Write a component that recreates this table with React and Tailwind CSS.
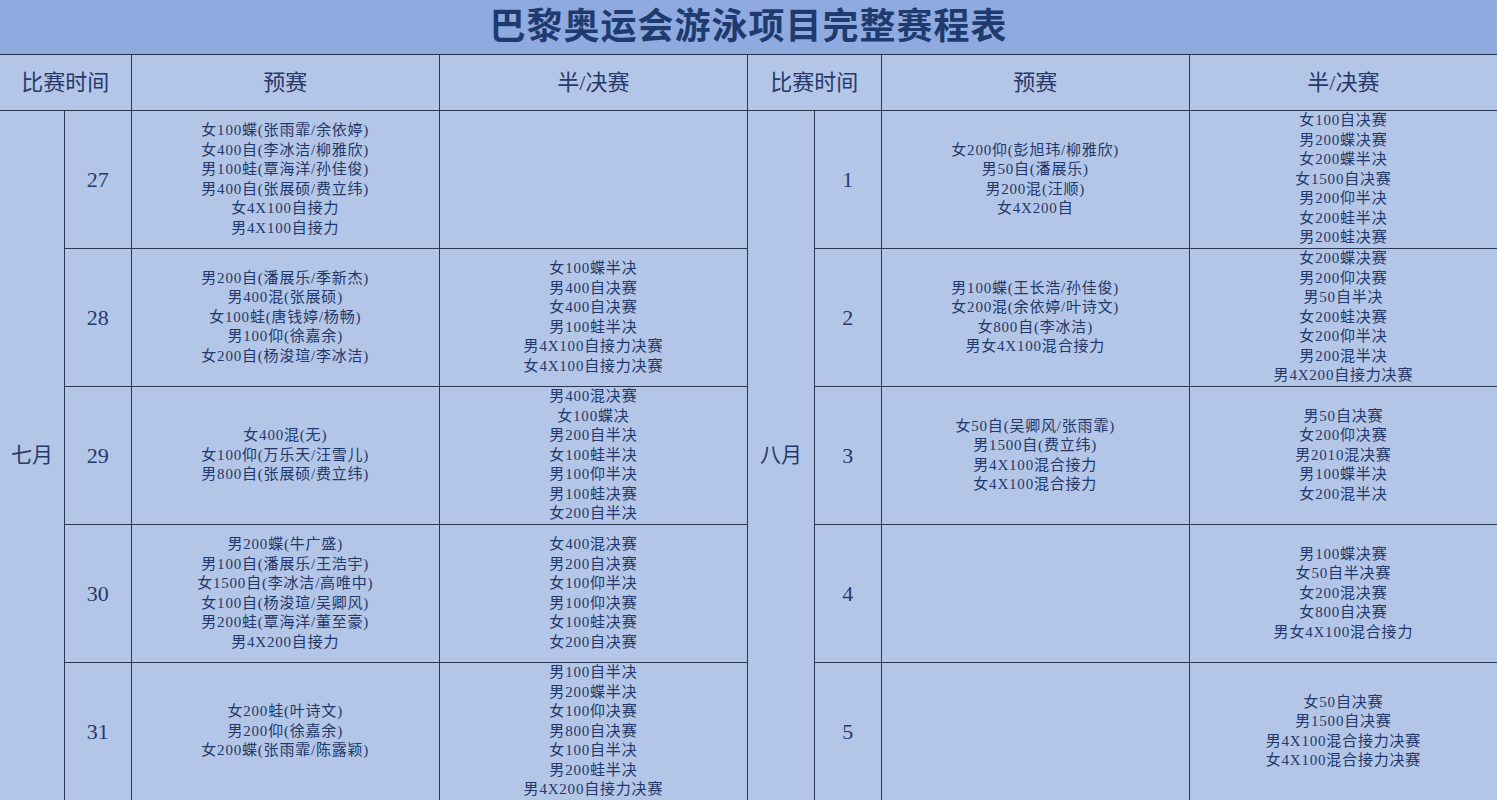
import React from "react";

const FONT = { fontFamily: '"Liberation Serif", "Noto Sans CJK SC", serif' };

const july = [
  {
    day: "27",
    heats: [
      "女100蝶(张雨霏/余依婷)",
      "女400自(李冰洁/柳雅欣)",
      "男100蛙(覃海洋/孙佳俊)",
      "男400自(张展硕/费立纬)",
      "女4X100自接力",
      "男4X100自接力",
    ],
    finals: [],
  },
  {
    day: "28",
    heats: [
      "男200自(潘展乐/季新杰)",
      "男400混(张展硕)",
      "女100蛙(唐钱婷/杨畅)",
      "男100仰(徐嘉余)",
      "女200自(杨浚瑄/李冰洁)",
    ],
    finals: [
      "女100蝶半决",
      "男400自决赛",
      "女400自决赛",
      "男100蛙半决",
      "男4X100自接力决赛",
      "女4X100自接力决赛",
    ],
  },
  {
    day: "29",
    heats: ["女400混(无)", "女100仰(万乐天/汪雪儿)", "男800自(张展硕/费立纬)"],
    finals: [
      "男400混决赛",
      "女100蝶决",
      "男200自半决",
      "女100蛙半决",
      "男100仰半决",
      "男100蛙决赛",
      "女200自半决",
    ],
  },
  {
    day: "30",
    heats: [
      "男200蝶(牛广盛)",
      "男100自(潘展乐/王浩宇)",
      "女1500自(李冰洁/高唯中)",
      "女100自(杨浚瑄/吴卿风)",
      "男200蛙(覃海洋/董至豪)",
      "男4X200自接力",
    ],
    finals: [
      "女400混决赛",
      "男200自决赛",
      "女100仰半决",
      "男100仰决赛",
      "女100蛙决赛",
      "女200自决赛",
    ],
  },
  {
    day: "31",
    heats: ["女200蛙(叶诗文)", "男200仰(徐嘉余)", "女200蝶(张雨霏/陈露颖)"],
    finals: [
      "男100自半决",
      "男200蝶半决",
      "女100仰决赛",
      "男800自决赛",
      "女100自半决",
      "男200蛙半决",
      "男4X200自接力决赛",
    ],
  },
];

const august = [
  {
    day: "1",
    heats: ["女200仰(彭旭玮/柳雅欣)", "男50自(潘展乐)", "男200混(汪顺)", "女4X200自"],
    finals: [
      "女100自决赛",
      "男200蝶决赛",
      "女200蝶半决",
      "女1500自决赛",
      "男200仰半决",
      "女200蛙半决",
      "男200蛙决赛",
    ],
  },
  {
    day: "2",
    heats: [
      "男100蝶(王长浩/孙佳俊)",
      "女200混(余依婷/叶诗文)",
      "女800自(李冰洁)",
      "男女4X100混合接力",
    ],
    finals: [
      "女200蝶决赛",
      "男200仰决赛",
      "男50自半决",
      "女200蛙决赛",
      "女200仰半决",
      "男200混半决",
      "男4X200自接力决赛",
    ],
  },
  {
    day: "3",
    heats: ["女50自(吴卿风/张雨霏)", "男1500自(费立纬)", "男4X100混合接力", "女4X100混合接力"],
    finals: ["男50自决赛", "女200仰决赛", "男2010混决赛", "男100蝶半决", "女200混半决"],
  },
  {
    day: "4",
    heats: [],
    finals: ["男100蝶决赛", "女50自半决赛", "女200混决赛", "女800自决赛", "男女4X100混合接力"],
  },
  {
    day: "5",
    heats: [],
    finals: ["女50自决赛", "男1500自决赛", "男4X100混合接力决赛", "女4X100混合接力决赛"],
  },
];

const cell = "bg-[#b4c6e7] flex items-center justify-center text-center overflow-hidden";
const head = "text-[22px] text-[#26396a]";

const Lines = ({ items }) => (
  <div className="text-[15px] leading-[19.5px] tracking-[0.8px] text-[#22386a]">
    {items.map((t, i) => (
      <div key={i} className="whitespace-nowrap">
        {t}
      </div>
    ))}
  </div>
);

export default function App() {
  return (
    <div
      className="w-[1497px] h-[800px] bg-[#2b3650] grid gap-px grid-cols-[64fr_66fr_308fr_308fr_66fr_66fr_308fr_308fr] grid-rows-[54px_55px_137px_137px_137px_137px_137px]"
      style={FONT}
    >
      {/* Title */}
      <div className="col-span-8 bg-[#8eaadf] flex items-center justify-center">
        <h1 className="text-[36px] font-bold tracking-[1px] text-[#1f3a6e]">巴黎奥运会游泳项目完整赛程表</h1>
      </div>

      {/* Header row */}
      <div className={`${cell} ${head} col-start-1 col-span-2`}>比赛时间</div>
      <div className={`${cell} ${head}`}>预赛</div>
      <div className={`${cell} ${head}`}>半/决赛</div>
      <div className={`${cell} ${head} col-span-2`}>比赛时间</div>
      <div className={`${cell} ${head}`}>预赛</div>
      <div className={`${cell} ${head}`}>半/决赛</div>

      {/* Month columns */}
      <div className={`${cell} col-start-1 row-start-3 row-span-5 text-[21px] text-[#26396a]`}>七月</div>
      <div className={`${cell} col-start-5 row-start-3 row-span-5 text-[21px] text-[#26396a]`}>八月</div>

      {july.map((r, i) => (
        <React.Fragment key={"j" + r.day}>
          <div className={`${cell} ${head} col-start-2`} style={{ gridRowStart: i + 3 }}>
            {r.day}
          </div>
          <div className={`${cell} col-start-3`} style={{ gridRowStart: i + 3 }}>
            <Lines items={r.heats} />
          </div>
          <div className={`${cell} col-start-4`} style={{ gridRowStart: i + 3 }}>
            <Lines items={r.finals} />
          </div>
        </React.Fragment>
      ))}

      {august.map((r, i) => (
        <React.Fragment key={"a" + r.day}>
          <div className={`${cell} ${head} col-start-6`} style={{ gridRowStart: i + 3 }}>
            {r.day}
          </div>
          <div className={`${cell} col-start-7`} style={{ gridRowStart: i + 3 }}>
            <Lines items={r.heats} />
          </div>
          <div className={`${cell} col-start-8`} style={{ gridRowStart: i + 3 }}>
            <Lines items={r.finals} />
          </div>
        </React.Fragment>
      ))}
    </div>
  );
}
